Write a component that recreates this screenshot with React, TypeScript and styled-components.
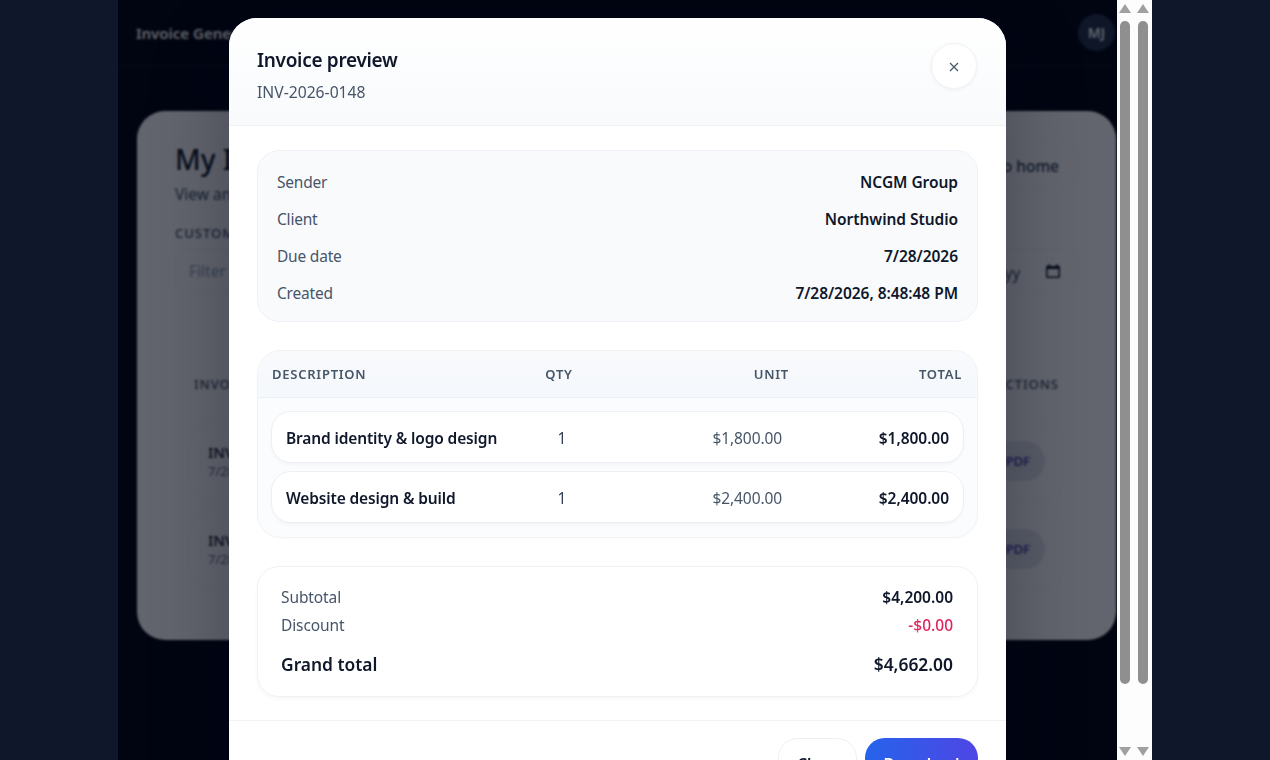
import React from "react";
import styled, { createGlobalStyle } from "styled-components";

const Global = createGlobalStyle`
  html, body { margin: 0; padding: 0; background: #0f172a; }
  * { box-sizing: border-box; }
  body { font-family: "Noto Sans", "Open Sans", sans-serif; }
`;

const Page = styled.div`
  width: 1270px; height: 760px; overflow: hidden; display: flex; justify-content: center;
  background: #0f172a;
`;
const Frame = styled.div`
  width: 1034px; height: 760px; display: flex; position: relative; overflow: hidden; background: #fff;
`;
const Viewport = styled.div`
  width: 999px; height: 760px; position: relative; overflow: hidden; background: #020410;
`;
const AppHeader = styled.header`
  height: 67px; padding: 14px 2px 0 18px; display: flex; justify-content: space-between;
  border-bottom: 1px solid rgba(255, 255, 255, 0.06);
`;
const Brand = styled.div`
  font-size: 15px; font-weight: 600; color: #ffffff; line-height: 38px;
`;
const Avatar = styled.div`
  width: 37px; height: 37px; border-radius: 50%; background: #22304a; color: #f8fafc;
  font-size: 14px; font-weight: 600; display: flex; align-items: center; justify-content: center;
`;
const Main = styled.main`
  padding: 44px 1px 0 19px;
`;
const Card = styled.section`
  height: 529px; border-radius: 28px; background: #fff; padding: 27px 38px;
`;
const CardTop = styled.div`
  display: flex; justify-content: space-between; align-items: flex-start;
`;
const CardTitle = styled.h1`
  margin: 1px 0 0; font-size: 28px; font-weight: 500; color: #0f172a; line-height: 40px;
`;
const CardSub = styled.p`
  margin: 0; font-size: 15.5px; color: #475569; line-height: 30px;
`;
const GhostButton = styled.div`
  height: 52px; padding: 3px 18px 0; border: 1px solid #f1f3f6; border-radius: 18px; font-size: 15.5px;
  font-weight: 500; color: #334155; display: flex; align-items: center;
`;
const Filters = styled.div`
  display: flex; justify-content: space-between; margin-top: 14px;
`;
const FilterField = styled.div<{ $width: number }>`
  display: flex; flex-direction: column; gap: 6px; width: ${p => p.$width}px;
`;
const FilterLabel = styled.label`
  font-size: 13px; font-weight: 500; letter-spacing: 1px; color: #475569; line-height: 20px;
`;
const FilterInput = styled.div`
  height: 44px; padding: 0 16px 0 13px; border: 1px solid #f1f3f6; border-radius: 14px; font-size: 15.5px;
  color: #94a3b8; display: flex; align-items: center; justify-content: space-between; white-space: nowrap;
`;
const DateText = styled.span`
  color: #475569; padding-top: 3px;
`;
const ListBox = styled.div`
  margin-top: 81px;
`;
const ListHead = styled.div`
  display: flex; justify-content: space-between; padding: 0 19px; font-size: 13px; font-weight: 500;
  letter-spacing: 1px; color: #475569; line-height: 20px;
`;
const ListRows = styled.div`
  display: flex; flex-direction: column; gap: 12px; padding: 29px 14px 0;
`;
const ListRow = styled.div`
  height: 76px; padding: 0 18px; border: 1px solid #f3f4f7; border-radius: 20px;
  display: flex; justify-content: space-between; align-items: center;
`;
const ListId = styled.div`
  font-size: 15px; font-weight: 500; color: #0f172a; line-height: 20px;
`;
const ListDate = styled.div`
  font-size: 13px; color: #64748b; line-height: 18px;
`;
const PdfButton = styled.div`
  height: 40px; padding: 0 15px; border-radius: 20px; background: #e5e7f0; color: #3730a3;
  font-size: 13px; font-weight: 500; display: flex; align-items: center;
`;

const Backdrop = styled.div`
  position: absolute; inset: 0; background: rgba(2, 6, 20, 0.62); backdrop-filter: blur(1px);
`;
const Modal = styled.div`
  position: absolute; left: 111px; top: 18px; width: 777px; background: #fff; border-radius: 28px 28px 0 0;
  box-shadow: 0 30px 80px rgba(2, 6, 23, 0.3);
`;
const ModalHeader = styled.div`
  height: 108px; padding: 25px 29px 0 28px; display: flex; justify-content: space-between;
  background: linear-gradient(180deg, #ffffff, #f8fafc); border-bottom: 1px solid #f0f2f6;
  border-radius: 28px 28px 0 0;
`;
const ModalTitle = styled.h2`
  margin: 0; font-size: 19px; font-weight: 600; letter-spacing: -0.3px; line-height: 34px; color: #0f172a;
`;
const ModalSub = styled.div`
  font-size: 15.7px; color: #475569; line-height: 30px;
`;
const CloseButton = styled.button`
  width: 46px; height: 46px; margin-top: 0; border: 1px solid #f0f2f6; border-radius: 50%;
  background: #fff; padding: 2px 0 0; display: flex; align-items: center; justify-content: center;
  box-shadow: 0 1px 4px rgba(15, 23, 42, 0.05);
`;
const ModalBody = styled.div`
  padding: 24px 28px 23px; display: flex; flex-direction: column; border-bottom: 1px solid #f0f2f6;
`;
const InfoCard = styled.div`
  height: 172px; padding: 12px 19px 9px; background: #f9fafc; border: 1px solid #eff1f6; border-radius: 22px;
  display: flex; flex-direction: column; justify-content: space-between;
`;
const InfoRow = styled.div`
  display: flex; justify-content: space-between; align-items: center; height: 37px;
`;
const InfoLabel = styled.span`
  color: #475569; font-size: 15.5px; letter-spacing: -0.2px;
`;
const InfoValue = styled.span`
  color: #0f172a; font-weight: 600; font-size: 15.5px; letter-spacing: -0.05px;
`;
const TableCard = styled.div`
  margin-top: 28px; height: 188px; border: 1px solid #f0f2f6; border-radius: 24px; background: #fbfcfd;
  overflow: hidden; box-shadow: 0 1px 3px rgba(15, 23, 42, 0.02);
`;
const TableHead = styled.div`
  height: 47px; padding: 0 14px 1px; display: grid; grid-template-columns: 253px 68px 196px 173px;
  align-items: center; background: linear-gradient(180deg, #f8fafc, #f5f8fc); border-bottom: 1px solid #eceff5;
`;
const HeadCell = styled.span<{ $align?: string }>`
  font-size: 13px; font-weight: 600; letter-spacing: 0.75px; color: #475569; text-align: ${p => p.$align || "left"};
`;
const TableRows = styled.div`
  padding: 13px 13px 0; display: flex; flex-direction: column; gap: 8px;
`;
const TableRow = styled.div`
  height: 52px; padding: 1px 14px 0; display: grid; grid-template-columns: 240px 72px 184px 167px;
  align-items: center; background: #fff; border: 1px solid #eceff5; border-radius: 20px;
  box-shadow: 0 2px 3px rgba(15, 23, 42, 0.03); font-size: 15.5px; color: #0f172a;
`;
const DescCell = styled.span`
  font-weight: 600; white-space: nowrap; letter-spacing: -0.14px;
`;
const QtyCell = styled.span`
  text-align: center; color: #334155;
`;
const UnitCell = styled.span`
  text-align: right; color: #475569; letter-spacing: -0.1px;
`;
const TotalCell = styled.span`
  text-align: right; font-weight: 600; letter-spacing: -0.05px;
`;
const TotalsCard = styled.div`
  margin-top: 28px; height: 131px; padding: 16px 24px 0 23px; background: #fff; border: 1px solid #f0f2f6;
  border-radius: 22px; box-shadow: 0 2px 4px rgba(15, 23, 42, 0.03);
`;
const TotalRow = styled.div`
  display: flex; justify-content: space-between; align-items: center; height: 28px;
`;
const TotalLabel = styled.span`
  color: #475569; font-size: 15.5px; letter-spacing: -0.1px;
`;
const TotalValue = styled.span<{ $danger?: boolean }>`
  color: ${p => (p.$danger ? "#e0245e" : "#0f172a")}; font-weight: ${p => (p.$danger ? 500 : 600)}; font-size: 15.5px;
`;
const GrandRow = styled.div`
  display: flex; justify-content: space-between; align-items: center; height: 28px; margin-top: 11px;
  font-size: 17.4px; font-weight: 600; color: #0f172a;
`;
const ModalFooter = styled.div`
  padding: 17px 28px; display: flex; justify-content: flex-end; gap: 8px;
`;
const FooterButton = styled.button<{ $primary?: boolean }>`
  height: 52px; border-radius: 20px; font: 600 15.5px "Noto Sans", sans-serif; padding: 0;
  width: ${p => (p.$primary ? "113px" : "79px")};
  border: ${p => (p.$primary ? "none" : "1px solid #eef0f4")};
  color: ${p => (p.$primary ? "#fff" : "#0f172a")};
  background: ${p => (p.$primary ? "linear-gradient(90deg, #2563eb, #4f46e5)" : "#fff")};
`;

const Scrollbars = styled.div`
  width: 35px; height: 760px; display: flex; background: #fdfdfd;
  padding-left: 3px; gap: 8px;
`;
const Track = styled.div`
  width: 10px; height: 760px; display: flex; flex-direction: column; align-items: center;
  padding-top: 4px;
`;
const ArrowUp = styled.div`
  flex: none; width: 0; height: 0; border-left: 6px solid transparent; border-right: 6px solid transparent;
  border-bottom: 9px solid #a0a0a0;
`;
const ArrowDown = styled.div`
  flex: none; width: 0; height: 0; border-left: 6px solid transparent; border-right: 6px solid transparent;
  border-top: 9px solid #a0a0a0; margin-top: 63px;
`;
const Thumb = styled.div`
  flex: none; width: 10px; height: 663px; margin-top: 8px; background: #8f8f8f; border-radius: 5px;
`;

const infoRows = [
  ["Sender", "NCGM Group"],
  ["Client", "Northwind Studio"],
  ["Due date", "7/28/2026"],
  ["Created", "7/28/2026, 8:48:48 PM"],
];
const lines = [
  ["Brand identity & logo design", "1", "$1,800.00", "$1,800.00"],
  ["Website design & build", "1", "$2,400.00", "$2,400.00"],
];

export default function App() {
  return (
    <Page>
      <Global />
      <Frame>
        <Viewport>
          <AppHeader>
            <Brand>Invoice Generator</Brand>
            <Avatar>MJ</Avatar>
          </AppHeader>
          <Main>
            <Card>
              <CardTop>
                <div>
                  <CardTitle>My Invoices</CardTitle>
                  <CardSub>View and download your invoices</CardSub>
                </div>
                <GhostButton>Back to home</GhostButton>
              </CardTop>
              <Filters>
                <FilterField $width={300}>
                  <FilterLabel>CUSTOMER</FilterLabel>
                  <FilterInput>Filter by customer</FilterInput>
                </FilterField>
                <FilterField $width={163}>
                  <FilterLabel>DATE</FilterLabel>
                  <FilterInput>
                    <DateText>mm/dd/yyyy</DateText>
                    <svg width="16" height="16" viewBox="0 0 16 16" aria-hidden="true">
                      <path fill="#0f172a" d="M3 1.5h2V3h6V1.5h2V3h1a1 1 0 0 1 1 1v10a1 1 0 0 1-1 1H2a1 1 0 0 1-1-1V4a1 1 0 0 1 1-1h1zM2.5 6v7.5h11V6z" />
                    </svg>
                  </FilterInput>
                </FilterField>
              </Filters>
              <ListBox>
                <ListHead><span>INVOICE</span><span>ACTIONS</span></ListHead>
                <ListRows>
                  {["INV-2026-0148", "INV-2026-0147"].map(id => (
                    <ListRow key={id}>
                      <div>
                        <ListId>{id}</ListId>
                        <ListDate>7/28/2026</ListDate>
                      </div>
                      <PdfButton>PDF</PdfButton>
                    </ListRow>
                  ))}
                </ListRows>
              </ListBox>
            </Card>
          </Main>
          <Backdrop />
          <Modal>
            <ModalHeader>
              <div>
                <ModalTitle>Invoice preview</ModalTitle>
                <ModalSub>INV-2026-0148</ModalSub>
              </div>
              <CloseButton aria-label="Close">
                <svg width="10" height="10" viewBox="0 0 10 10" aria-hidden="true">
                  <path d="M1 1l8 8M9 1l-8 8" stroke="#475569" strokeWidth="1.2" fill="none" />
                </svg>
              </CloseButton>
            </ModalHeader>
            <ModalBody>
              <InfoCard>
                {infoRows.map(([k, v]) => (
                  <InfoRow key={k}><InfoLabel>{k}</InfoLabel><InfoValue>{v}</InfoValue></InfoRow>
                ))}
              </InfoCard>
              <TableCard>
                <TableHead>
                  <HeadCell>DESCRIPTION</HeadCell>
                  <HeadCell $align="center">QTY</HeadCell>
                  <HeadCell $align="right">UNIT</HeadCell>
                  <HeadCell $align="right">TOTAL</HeadCell>
                </TableHead>
                <TableRows>
                  {lines.map(l => (
                    <TableRow key={l[0]}>
                      <DescCell>{l[0]}</DescCell>
                      <QtyCell>{l[1]}</QtyCell>
                      <UnitCell>{l[2]}</UnitCell>
                      <TotalCell>{l[3]}</TotalCell>
                    </TableRow>
                  ))}
                </TableRows>
              </TableCard>
              <TotalsCard>
                <TotalRow><TotalLabel>Subtotal</TotalLabel><TotalValue>$4,200.00</TotalValue></TotalRow>
                <TotalRow><TotalLabel>Discount</TotalLabel><TotalValue $danger>-$0.00</TotalValue></TotalRow>
                <GrandRow><span>Grand total</span><span>$4,662.00</span></GrandRow>
              </TotalsCard>
            </ModalBody>
            <ModalFooter>
              <FooterButton>Close</FooterButton>
              <FooterButton $primary>Download</FooterButton>
            </ModalFooter>
          </Modal>
        </Viewport>
        <Scrollbars>
          {[0, 1].map(i => (
            <Track key={i}>
              <ArrowUp />
              <Thumb />
              <ArrowDown />
            </Track>
          ))}
        </Scrollbars>
      </Frame>
    </Page>
  );
}
